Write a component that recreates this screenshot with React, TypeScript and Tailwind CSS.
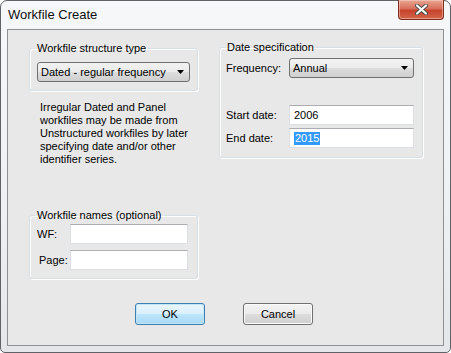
import type { ReactNode } from 'react';

const font = "font-['Liberation_Sans',Arial,sans-serif]";

const Arrow = () => (
  <svg width="7" height="4" viewBox="0 0 7 4" className="shrink-0">
    <path d="M0 0h7L3.5 4z" fill="#000" />
  </svg>
);

const Combo = ({ value, className }: { value: string; className: string }) => (
  <div
    className={`h-[20px] flex items-center pl-[3px] pr-[5px] border border-[#707070] rounded-[3px] bg-[linear-gradient(180deg,#f2f2f2_0%,#ebebeb_50%,#dddddd_51%,#cfcfcf_100%)] ${className}`}
  >
    <span className="flex-1 leading-[14px]">{value}</span>
    <Arrow />
  </div>
);

const TextBox = ({ children, className }: { children?: ReactNode; className: string }) => (
  <div
    className={`h-[20px] flex items-center pl-[4px] bg-white border border-[#dbdfe6] border-t-[#abadb3] ${className}`}
  >
    {children}
  </div>
);

const Group = ({ title, className, children }: { title: string; className: string; children: ReactNode }) => (
  <fieldset
    className={`border border-[#d5dfe5] rounded-[3px] shadow-[inset_1px_1px_0_#fff,1px_1px_0_#fff] ${className}`}
  >
    <legend className="ml-[5px] px-[2px] leading-[14px]">{title}</legend>
    {children}
  </fieldset>
);

const Button = ({ label, primary }: { label: string; primary?: boolean }) => (
  <div
    className={
      primary
        ? 'w-[70px] h-[22px] flex items-center justify-center rounded-[3px] border border-[#3c7fb1] shadow-[inset_0_0_0_1px_#c4e5f6] bg-[linear-gradient(180deg,#eaf6fd_0%,#d9f0fc_50%,#bee6fd_51%,#a7d9f5_100%)]'
        : 'w-[70px] h-[22px] flex items-center justify-center rounded-[3px] border border-[#707070] shadow-[inset_0_0_0_1px_#fbfbfb] bg-[linear-gradient(180deg,#f2f2f2_0%,#ebebeb_50%,#dddddd_51%,#cfcfcf_100%)]'
    }
  >
    {label}
  </div>
);

export default function App() {
  return (
    <div
      className={`w-[451px] h-[353px] flex flex-col border border-[#5f6266] rounded-t-[7px] rounded-b-[5px] bg-[linear-gradient(180deg,#f6f7f8_0%,#eef0f2_60%,#e4e6e9_100%)] text-[11px] text-black ${font}`}
    >
      <div className="h-[28px] flex items-start">
        <div className="pl-[7px] pt-[6px] text-[13px] leading-[16px] text-[#101010]">Workfile Create</div>
        <div className="ml-auto mr-[6px] -mt-px w-[46px] h-[20px] flex items-center justify-center rounded-b-[4px] border border-[#7a2f22] border-t-0 shadow-[inset_0_0_0_1px_rgba(255,220,210,0.45)] bg-[linear-gradient(180deg,#e8a895_0%,#d86f5a_45%,#c7432b_55%,#d3654a_100%)]">
          <svg width="15" height="11" viewBox="0 0 15 11">
            <path d="M3 1.5l9 8M12 1.5l-9 8" stroke="#4a4a4a" strokeWidth="4" strokeLinecap="round" />
            <path d="M3 1.5l9 8M12 1.5l-9 8" stroke="#fff" strokeWidth="2.2" strokeLinecap="round" />
          </svg>
        </div>
      </div>

      <div className="mx-[6px] mb-[6px] flex-1 border border-[#8e9194] bg-[#e8e8e8] flex flex-col">
        <div className="flex items-start pt-[10px] pl-[21px]">
          <div className="w-[169px] mt-px flex flex-col">
            <Group title="Workfile structure type" className="pb-[8px]">
              <Combo value="Dated - regular frequency" className="ml-[7px] mt-[7px] w-[153px]" />
            </Group>

            <div className="mt-[10px] ml-[11px] leading-[13px]">
              <div>Irregular Dated and Panel</div>
              <div>workfiles may be made from</div>
              <div>Unstructured workfiles by later</div>
              <div>specifying date and/or other</div>
              <div>identifier series.</div>
            </div>

            <Group title="Workfile names (optional)" className="mt-[42px] pb-[8px]">
              <div className="mt-[2px] flex items-center">
                <span className="w-[40px] pl-[7px]">WF:</span>
                <TextBox className="w-[118px]" />
              </div>
              <div className="mt-[6px] flex items-center">
                <span className="w-[40px] pl-[9px]">Page:</span>
                <TextBox className="w-[118px]" />
              </div>
            </Group>
          </div>

          <Group title="Date specification" className="ml-[21px] w-[204px] pb-[9px]">
            <div className="mt-[4px] flex items-center">
              <span className="w-[69px] pl-[6px]">Frequency:</span>
              <Combo value="Annual" className="w-[125px]" />
            </div>
            <div className="mt-[27px] flex items-center">
              <span className="w-[69px] pl-[6px]">Start date:</span>
              <TextBox className="w-[125px]">2006</TextBox>
            </div>
            <div className="mt-[3px] flex items-center">
              <span className="w-[69px] pl-[6px]">End date:</span>
              <TextBox className="w-[125px]">
                <span className="bg-[#3399ff] text-white leading-[13px] px-px">2015</span>
              </TextBox>
            </div>
          </Group>
        </div>

        <div className="mt-[24px] pl-[127px] flex gap-[38px]">
          <Button label="OK" primary />
          <Button label="Cancel" />
        </div>
      </div>
    </div>
  );
}
